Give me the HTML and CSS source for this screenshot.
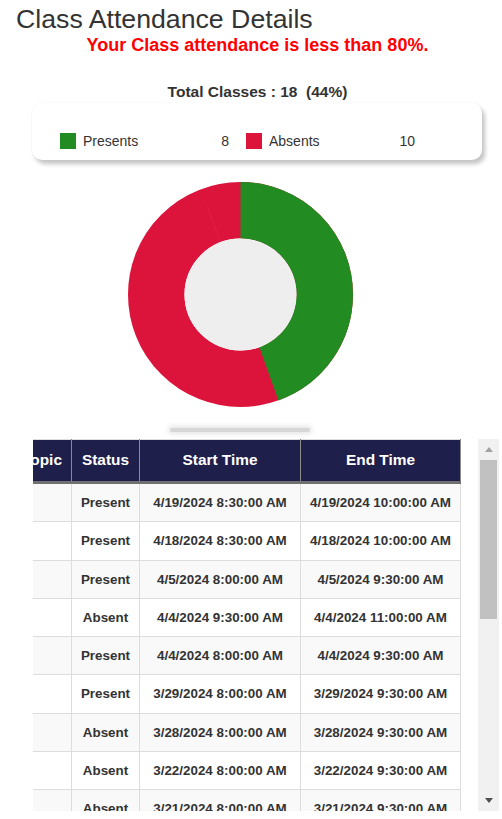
FILE: index.html
```html
<!DOCTYPE html>
<html lang="en">
<head>
<meta charset="utf-8">
<title>Class Attendance Details</title>
<link rel="stylesheet" href="styles.css">
</head>
<body>
<h1 class="title">Class Attendance Details</h1>
<section class="summary">
  <p class="alert">Your Class attendance is less than 80%.</p>
  <p class="total">Total Classes : 18 &nbsp;(44%)</p>
  <div class="legend">
    <div class="legend-item">
      <span class="swatch swatch-present"></span>
      <span class="legend-label">Presents</span>
      <span class="legend-value">8</span>
    </div>
    <div class="legend-item">
      <span class="swatch swatch-absent"></span>
      <span class="legend-label">Absents</span>
      <span class="legend-value">10</span>
    </div>
  </div>
</section>
<div class="chart">
  <svg class="donut" width="225" height="225" viewBox="0 0 225 225">
    <circle cx="112.5" cy="112.5" r="84.25" fill="none" stroke="#dc143c" stroke-width="56.5"/>
    <circle cx="112.5" cy="112.5" r="84.25" fill="none" stroke="#228b22" stroke-width="56.5"
            stroke-dasharray="235.27 600" transform="rotate(-90 112.5 112.5)"/>
    <line x1="79.5" y1="25" x2="92.5" y2="60" stroke="#ee6080" stroke-width="0.6" opacity="0.25"/>
    <circle cx="112.5" cy="112.5" r="56" fill="#eeeeee"/>
  </svg>
  <div class="chart-shadow"></div>
</div>
<div class="table-box">
  <div class="table-viewport">
    <table class="attendance">
      <colgroup>
        <col class="c-topic"><col class="c-status"><col class="c-start"><col class="c-end">
      </colgroup>
      <thead>
        <tr><th>Topic</th><th>Status</th><th>Start Time</th><th>End Time</th></tr>
      </thead>
      <tbody>
        <tr><td></td><td>Present</td><td>4/19/2024 8:30:00 AM</td><td>4/19/2024 10:00:00 AM</td></tr>
        <tr><td></td><td>Present</td><td>4/18/2024 8:30:00 AM</td><td>4/18/2024 10:00:00 AM</td></tr>
        <tr><td></td><td>Present</td><td>4/5/2024 8:00:00 AM</td><td>4/5/2024 9:30:00 AM</td></tr>
        <tr><td></td><td>Absent</td><td>4/4/2024 9:30:00 AM</td><td>4/4/2024 11:00:00 AM</td></tr>
        <tr><td></td><td>Present</td><td>4/4/2024 8:00:00 AM</td><td>4/4/2024 9:30:00 AM</td></tr>
        <tr><td></td><td>Present</td><td>3/29/2024 8:00:00 AM</td><td>3/29/2024 9:30:00 AM</td></tr>
        <tr><td></td><td>Absent</td><td>3/28/2024 8:00:00 AM</td><td>3/28/2024 9:30:00 AM</td></tr>
        <tr><td></td><td>Absent</td><td>3/22/2024 8:00:00 AM</td><td>3/22/2024 9:30:00 AM</td></tr>
        <tr><td></td><td>Absent</td><td>3/21/2024 8:00:00 AM</td><td>3/21/2024 9:30:00 AM</td></tr>
        <tr><td></td><td>Present</td><td>3/15/2024 8:00:00 AM</td><td>3/15/2024 9:30:00 AM</td></tr>
        <tr><td></td><td>Absent</td><td>3/14/2024 8:00:00 AM</td><td>3/14/2024 9:30:00 AM</td></tr>
        <tr><td></td><td>Absent</td><td>3/8/2024 8:00:00 AM</td><td>3/8/2024 9:30:00 AM</td></tr>
        <tr><td></td><td>Present</td><td>3/7/2024 8:00:00 AM</td><td>3/7/2024 9:30:00 AM</td></tr>
        <tr><td></td><td>Absent</td><td>3/1/2024 8:00:00 AM</td><td>3/1/2024 9:30:00 AM</td></tr>
        <tr><td></td><td>Absent</td><td>2/29/2024 8:00:00 AM</td><td>2/29/2024 9:30:00 AM</td></tr>
        <tr><td></td><td>Present</td><td>2/23/2024 8:00:00 AM</td><td>2/23/2024 9:30:00 AM</td></tr>
        <tr><td></td><td>Absent</td><td>2/22/2024 8:00:00 AM</td><td>2/22/2024 9:30:00 AM</td></tr>
        <tr><td></td><td>Absent</td><td>2/16/2024 8:00:00 AM</td><td>2/16/2024 9:30:00 AM</td></tr>
      </tbody>
    </table>
  </div>
  <div class="scrollbar" aria-hidden="true">
    <div class="sb-button"><span class="arrow-up"></span></div>
    <div class="sb-thumb"></div>
    <div class="sb-track"></div>
    <div class="sb-button"><span class="arrow-down"></span></div>
  </div>
</div>
</body>
</html>
```
FILE: styles.css
```css
html, body {
  margin: 0;
  padding: 0;
  background: #ffffff;
  font-family: "Liberation Sans", Arial, sans-serif;
  color: #333333;
}

.title {
  margin: 4px 0 0 16px;
  font-size: 26.7px;
  line-height: 31px;
  font-weight: normal;
  color: #333333;
}

.summary {
  margin-left: 32px;
  width: 451px;
  text-align: center;
}

.alert {
  margin: 0;
  font-size: 18px;
  line-height: 21px;
  font-weight: bold;
  color: #ff0000;
}

.total {
  margin: 27px 0 0;
  font-size: 15.5px;
  line-height: 18px;
  font-weight: bold;
  color: #333333;
}

.legend {
  margin-top: 2px;
  width: 450px;
  box-sizing: border-box;
  padding: 30px 0 11px 28px;
  display: flex;
  gap: 17px;
  background: #ffffff;
  border-radius: 10px;
  box-shadow: 3px 4px 4px #c4c4c4, 0 0 2px #efefef;
  text-align: left;
}

.legend-item {
  width: 169px;
  display: flex;
  align-items: center;
  font-size: 14px;
  line-height: 16px;
  color: #333333;
}

.swatch {
  width: 16px;
  height: 16px;
  margin-right: 7px;
  flex: none;
}

.swatch-present { background: #228b22; }
.swatch-absent { background: #dc143c; }

.legend-label { flex: 1; }

.chart {
  display: flex;
  flex-direction: column;
  align-items: flex-start;
}

.donut {
  display: block;
  margin: 22px 0 0 128px;
}

.chart-shadow {
  margin: 21px 0 0 170px;
  width: 140px;
  height: 4px;
  border-radius: 3px;
  background: #d6d6d6;
  box-shadow: 0 0 5px 2px #e6e6e6;
}

.table-box {
  margin: 7px 0 0 33px;
  width: 466px;
  height: 372px;
  display: flex;
}

.table-viewport {
  flex: 1;
  overflow: hidden;
}

.scrollbar {
  width: 21px;
  flex: none;
  display: flex;
  flex-direction: column;
  background: #f1f1f1;
}

.sb-button {
  height: 21px;
  flex: none;
  display: flex;
  align-items: center;
  justify-content: center;
}

.arrow-up {
  width: 0;
  height: 0;
  border-left: 4.5px solid transparent;
  border-right: 4.5px solid transparent;
  border-bottom: 5px solid #a3a3a3;
}

.arrow-down {
  width: 0;
  height: 0;
  border-left: 4.5px solid transparent;
  border-right: 4.5px solid transparent;
  border-top: 5px solid #505050;
}

.sb-thumb {
  height: 159px;
  margin: 0 2px;
  background: #c1c1c1;
  flex: none;
}

.sb-track {
  flex: 1;
}

.attendance {
  margin-left: -21px;
  width: 448px;
  table-layout: fixed;
  border-collapse: collapse;
  text-align: center;
}

.c-topic { width: 59px; }
.c-status { width: 68px; }
.c-start { width: 161px; }
.c-end { width: 160px; }

.attendance th {
  background: #1f1f4b;
  color: #ffffff;
  font-size: 15.4px;
  line-height: 18px;
  font-weight: bold;
  padding: 11px 0 12px;
  border: 1px solid #8a8a8a;
  border-top-color: #dddddd;
  border-bottom: 3px solid #707070;
  white-space: nowrap;
}

.attendance td {
  font-size: 13.4px;
  line-height: 15.3px;
  font-weight: bold;
  color: #333333;
  padding: 11px 0;
  border: 1px solid #dddddd;
  white-space: nowrap;
}

.attendance tbody tr:nth-child(odd) td {
  background: #f9f9f9;
}

.attendance tbody tr:nth-child(even) td {
  background: #ffffff;
}
```
